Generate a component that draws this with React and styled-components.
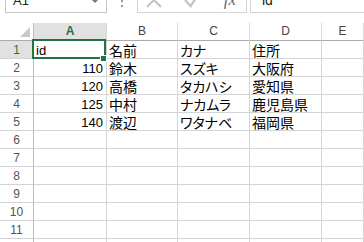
import React from "react";
import styled, { createGlobalStyle } from "styled-components";

const Global = createGlobalStyle`
  html, body { margin: 0; padding: 0; background: #fff; overflow: hidden; }
  body { font-family: "Liberation Sans", "Noto Sans CJK JP", sans-serif; }
`;

const Page = styled.div`
  width: 364px;
  height: 242px;
  overflow: hidden;
  display: flex;
  flex-direction: column;
`;

const FormulaBar = styled.div`
  display: flex;
  align-items: stretch;
  height: 25px;
  margin-top: -12px;
  flex: none;
`;

const NameBox = styled.div`
  margin-left: 5px;
  width: 102px;
  box-sizing: border-box;
  border: 1px solid #c6c6c6;
  display: flex;
  align-items: center;
  justify-content: space-between;
  padding: 0 8px 0 7px;
  font-size: 13px;
  color: #222;
`;

const Arrow = styled.span`
  width: 0;
  height: 0;
  border-left: 3px solid transparent;
  border-right: 3px solid transparent;
  border-top: 3px solid #777;
  margin-top: 2px;
`;

const Dots = styled.div`
  width: 30px;
  display: flex;
  flex-direction: column;
  align-items: center;
  justify-content: center;
  gap: 3px;
  & > i {
    display: block;
    width: 2px;
    height: 2px;
    background: #9a9a9a;
  }
`;

const IconGroup = styled.div`
  width: 110px;
  box-sizing: border-box;
  border: 1px solid #d4d4d4;
  border-top: none;
  display: flex;
  align-items: center;
  padding-left: 8px;
  gap: 0;
`;

const IconSlot = styled.div`
  width: ${(p) => p.$w}px;
  height: 24px;
  display: flex;
  align-items: center;
  justify-content: center;
`;

const Fx = styled.span`
  font-family: "Liberation Serif", "DejaVu Serif", serif;
  font-style: italic;
  font-size: 17px;
  color: #6a6a6a;
  letter-spacing: 0px;
`;

const FormulaInput = styled.div`
  flex: 1;
  margin-left: 3px;
  box-sizing: border-box;
  border: 1px solid #d4d4d4;
  border-top: none;
  border-right: none;
  display: flex;
  align-items: center;
  padding-left: 11px;
  font-size: 14px;
  color: #222;
`;

const Sheet = styled.div`
  margin-top: 10px;
  display: grid;
  grid-template-columns: 34px 73px 71px 72px 72px 1fr;
  grid-template-rows: 18px;
  grid-auto-rows: 18px;
`;

const Corner = styled.div`
  box-sizing: border-box;
  border-right: 1px solid #bdbdbd;
  border-bottom: 1px solid #ababab;
  display: flex;
  align-items: flex-end;
  justify-content: flex-end;
  padding: 0 3px 3px 0;
`;

const ColHead = styled.div`
  box-sizing: border-box;
  border-right: 1px solid #dadada;
  border-bottom: 1px solid ${(p) => (p.$active ? "#217346" : "#ababab")};
  background: ${(p) => (p.$active ? "#e1e1e1" : "#fff")};
  box-shadow: ${(p) => (p.$active ? "inset 0 -1px 0 #217346" : "none")};
  color: ${(p) => (p.$active ? "#217346" : "#444")};
  font-weight: ${(p) => (p.$active ? "bold" : "normal")};
  font-size: 12px;
  line-height: 17px;
  text-align: center;
`;

const RowHead = styled.div`
  box-sizing: border-box;
  border-right: 1px solid #bdbdbd;
  border-bottom: 1px solid #d4d4d4;
  background: ${(p) => (p.$active ? "#e1e1e1" : "#fff")};
  color: ${(p) => (p.$active ? "#217346" : "#555")};
  font-size: 12px;
  line-height: 15px;
  display: flex;
  align-items: flex-end;
  justify-content: center;
`;

const Cell = styled.div`
  position: relative;
  box-sizing: border-box;
  border-right: 1px solid #d4d4d4;
  border-bottom: 1px solid #d4d4d4;
  display: flex;
  align-items: flex-end;
  justify-content: ${(p) => (p.$num ? "flex-end" : "flex-start")};
  padding: 0 ${(p) => (p.$num ? 3 : 0)}px 0 ${(p) => (p.$num ? 0 : 2)}px;
  font-size: ${(p) => (p.$jp ? 14 : 13)}px;
  line-height: 14px;
  color: #000;
  white-space: nowrap;
  font-feature-settings: ${(p) => (p.$kana ? '"palt"' : "normal")};
  ${(p) =>
    p.$selected &&
    `
    z-index: 2;
    &::after {
      content: "";
      position: absolute;
      left: -2px;
      top: -2px;
      right: 0;
      bottom: -1px;
      border: 2px solid #217346;
      pointer-events: none;
    }
    &::before {
      content: "";
      position: absolute;
      right: -1px;
      bottom: -4px;
      width: 5px;
      height: 5px;
      background: #217346;
      border: 1px solid #fff;
      z-index: 3;
    }
  `}
`;

const columns = ["A", "B", "C", "D", "E"];

const data = [
  ["id", "名前", "カナ", "住所"],
  [110, "鈴木", "スズキ", "大阪府"],
  [120, "高橋", "タカハシ", "愛知県"],
  [125, "中村", "ナカムラ", "鹿児島県"],
  [140, "渡辺", "ワタナベ", "福岡県"],
];

const TOTAL_ROWS = 12;

export default function App() {
  const rows = [];
  for (let r = 0; r < TOTAL_ROWS; r++) {
    const vals = data[r] || [];
    rows.push(
      <React.Fragment key={r}>
        <RowHead $active={r === 0}>{r + 1}</RowHead>
        {columns.map((c, ci) => {
          const v = vals[ci];
          const num = typeof v === "number";
          return (
            <Cell
              key={c}
              $num={num}
              $jp={v !== undefined && !num && v !== "id"}
              $kana={ci === 2}
              $selected={r === 0 && ci === 0}
            >
              {v}
            </Cell>
          );
        })}
      </React.Fragment>
    );
  }

  return (
    <Page>
      <Global />
      <FormulaBar>
        <NameBox>
          <span>A1</span>
          <Arrow />
        </NameBox>
        <Dots>
          <i />
          <i />
          <i />
        </Dots>
        <IconGroup>
          <IconSlot $w={16}>
            <svg width="16" height="16" viewBox="0 0 16 16">
              <path d="M1 1 L15 15 M15 1 L1 15" stroke="#c3c3c3" strokeWidth="2" fill="none" />
            </svg>
          </IconSlot>
          <IconSlot $w={22} />
          <IconSlot $w={16}>
            <svg width="17" height="16" viewBox="0 0 17 16">
              <path d="M1 8 L7 14.5 L16 1" stroke="#c3c3c3" strokeWidth="2.4" fill="none" />
            </svg>
          </IconSlot>
          <IconSlot $w={20} />
          <IconSlot $w={20}>
            <Fx>fx</Fx>
          </IconSlot>
        </IconGroup>
        <FormulaInput>id</FormulaInput>
      </FormulaBar>
      <Sheet>
        <Corner>
          <svg width="10" height="10" viewBox="0 0 10 10">
            <path d="M10 0 L10 10 L0 10 Z" fill="#c9c9c9" />
          </svg>
        </Corner>
        {columns.map((c, i) => (
          <ColHead key={c} $active={i === 0}>
            {c}
          </ColHead>
        ))}
        {rows}
      </Sheet>
    </Page>
  );
}
